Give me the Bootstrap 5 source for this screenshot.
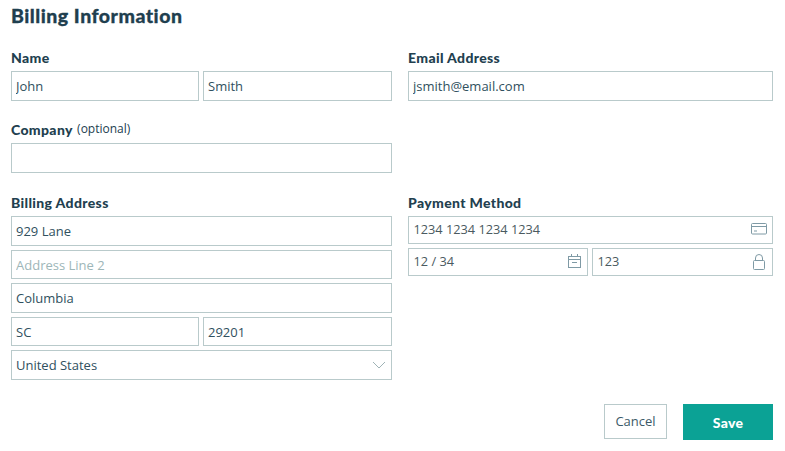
<!doctype html>
<html lang="en">
<head>
<meta charset="utf-8">
<title>Billing Information</title>
<link href="https://cdn.jsdelivr.net/npm/bootstrap@5.3.0/dist/css/bootstrap.min.css" rel="stylesheet">
<style>
html,body{background:#fff;}
body{font-family:"Open Sans","Noto Sans",sans-serif;color:#22404f;overflow:hidden;}
.bill-page{padding:5px 12px 0 11px;width:785px;}
.bill-title{font-family:Lato,sans-serif;font-weight:900;font-size:19.5px;line-height:22px;color:#1f3f4f;margin:0 0 23px;letter-spacing:.5px;-webkit-text-stroke:.3px #1f3f4f;}
.bill-grid{display:grid;grid-template-columns:381px 365px;column-gap:16px;}
.bill-label{display:block;font-family:Lato,sans-serif;font-weight:900;font-size:14px;line-height:16px;letter-spacing:.35px;color:#22404f;margin:0 0 5px;}
.bill-label.bill-tight{margin-bottom:4px;}
.bill-opt{font-family:"Open Sans",sans-serif;font-weight:400;font-size:12px;letter-spacing:0;position:relative;top:-2px;margin-left:1px;}
.bill-input.form-control,.bill-input.form-select{border:1px solid #b9cacb;border-radius:0;height:30px;padding:0 4px;font-size:13px;line-height:28px;color:#30505e;background-color:#fff;box-shadow:none;}
.bill-input.h29{height:29px;}
.bill-input::placeholder{color:#9db6b8;opacity:1;}
.bill-input.form-select{background-image:none;}
.bill-group{display:flex;gap:4px;}
.bill-group>.bill-input,.bill-group>.bill-pay{flex:1 1 0;min-width:0;width:auto;}
.bill-group>.bill-first{flex:0 0 188px;}
.bill-group>.bill-pay.bill-first{flex:0 0 180px;}
.bill-stack{display:flex;flex-direction:column;gap:4px;}
.bill-sel,.bill-pay{position:relative;}
.bill-sel svg,.bill-pay svg{position:absolute;pointer-events:none;}
.bill-pay .bill-input.form-control{height:28px;padding:0 5px 2px 4.5px;font-family:"Open Sans",sans-serif;font-size:12.75px;line-height:24px;color:#4a5a60;}
.bill-actions{display:flex;justify-content:flex-end;align-items:flex-start;gap:16px;margin-top:24px;}
.bill-cancel.btn{width:63px;height:35px;padding:0;border:1px solid #b9cacb;border-radius:0;background:#fff;color:#3c5a68;font-size:13px;}
.bill-save.btn{width:90px;height:36px;padding:0;border:0;border-radius:0;background:#0ba295;color:#fff;font-family:Lato,sans-serif;font-weight:900;font-size:14px;letter-spacing:.3px;}
.bill-company{margin-top:21px;}
.bill-addr{margin-top:22px;}
</style>
</head>
<body>
<main class="bill-page">
  <h1 class="bill-title">Billing Information</h1>
  <div class="bill-grid">
    <div>
      <label class="bill-label">Name</label>
      <div class="bill-group">
        <input class="form-control bill-input bill-first" value="John">
        <input class="form-control bill-input" value="Smith">
      </div>
    </div>
    <div>
      <label class="bill-label">Email Address</label>
      <input class="form-control bill-input" value="jsmith@email.com">
    </div>
    <div class="bill-company">
      <label class="bill-label bill-tight">Company <span class="bill-opt">(optional)</span></label>
      <input class="form-control bill-input">
    </div>
    <div></div>
    <div class="bill-addr">
      <label class="bill-label">Billing Address</label>
      <div class="bill-stack">
        <input class="form-control bill-input" value="929 Lane">
        <input class="form-control bill-input h29" placeholder="Address Line 2">
        <input class="form-control bill-input" value="Columbia">
        <div class="bill-group">
          <input class="form-control bill-input h29 bill-first" value="SC">
          <input class="form-control bill-input h29" value="29201">
        </div>
        <div class="bill-sel">
          <select class="form-select bill-input"><option>United States</option></select>
          <svg width="14" height="8" viewBox="0 0 14 8" style="right:6px;top:11px" fill="none" stroke="#9fb3b6" stroke-width="1"><path d="M1 1l6 6 6-6"/></svg>
        </div>
      </div>
    </div>
    <div class="bill-addr">
      <label class="bill-label">Payment Method</label>
      <div class="bill-stack">
        <div class="bill-pay">
          <input class="form-control bill-input" value="1234 1234 1234 1234">
          <svg width="16" height="12" viewBox="0 0 16 12" style="right:6px;top:7px" fill="none" stroke="#7f9aa5" stroke-width="1"><rect x=".5" y=".5" width="15" height="10.5" rx="1"/><path d="M.5 3.5h15M3 8h3"/></svg>
        </div>
        <div class="bill-group">
          <div class="bill-pay bill-first">
            <input class="form-control bill-input" value="12 / 34">
            <svg width="14" height="15" viewBox="0 0 14 15" style="right:6px;top:6px" fill="none" stroke="#7f9aa5" stroke-width="1"><rect x=".5" y="2.5" width="12" height="11"/><path d="M.5 5.5h12M3.5 0v3M9.5 0v3M4 8.5h5"/></svg>
          </div>
          <div class="bill-pay">
            <input class="form-control bill-input" value="123">
            <svg width="13" height="16" viewBox="0 0 13 16" style="right:7px;top:6px" fill="none" stroke="#7f9aa5" stroke-width="1"><rect x=".5" y="6.5" width="11" height="9" rx="1"/><path d="M2.5 6.5V4a3.5 3.5 0 0 1 7 0v2.5"/></svg>
          </div>
        </div>
      </div>
    </div>
  </div>
  <div class="bill-actions">
    <button type="button" class="btn bill-cancel">Cancel</button>
    <button type="button" class="btn bill-save">Save</button>
  </div>
</main>
<script src="https://cdn.jsdelivr.net/npm/bootstrap@5.3.0/dist/js/bootstrap.bundle.min.js"></script>
</body>
</html>
